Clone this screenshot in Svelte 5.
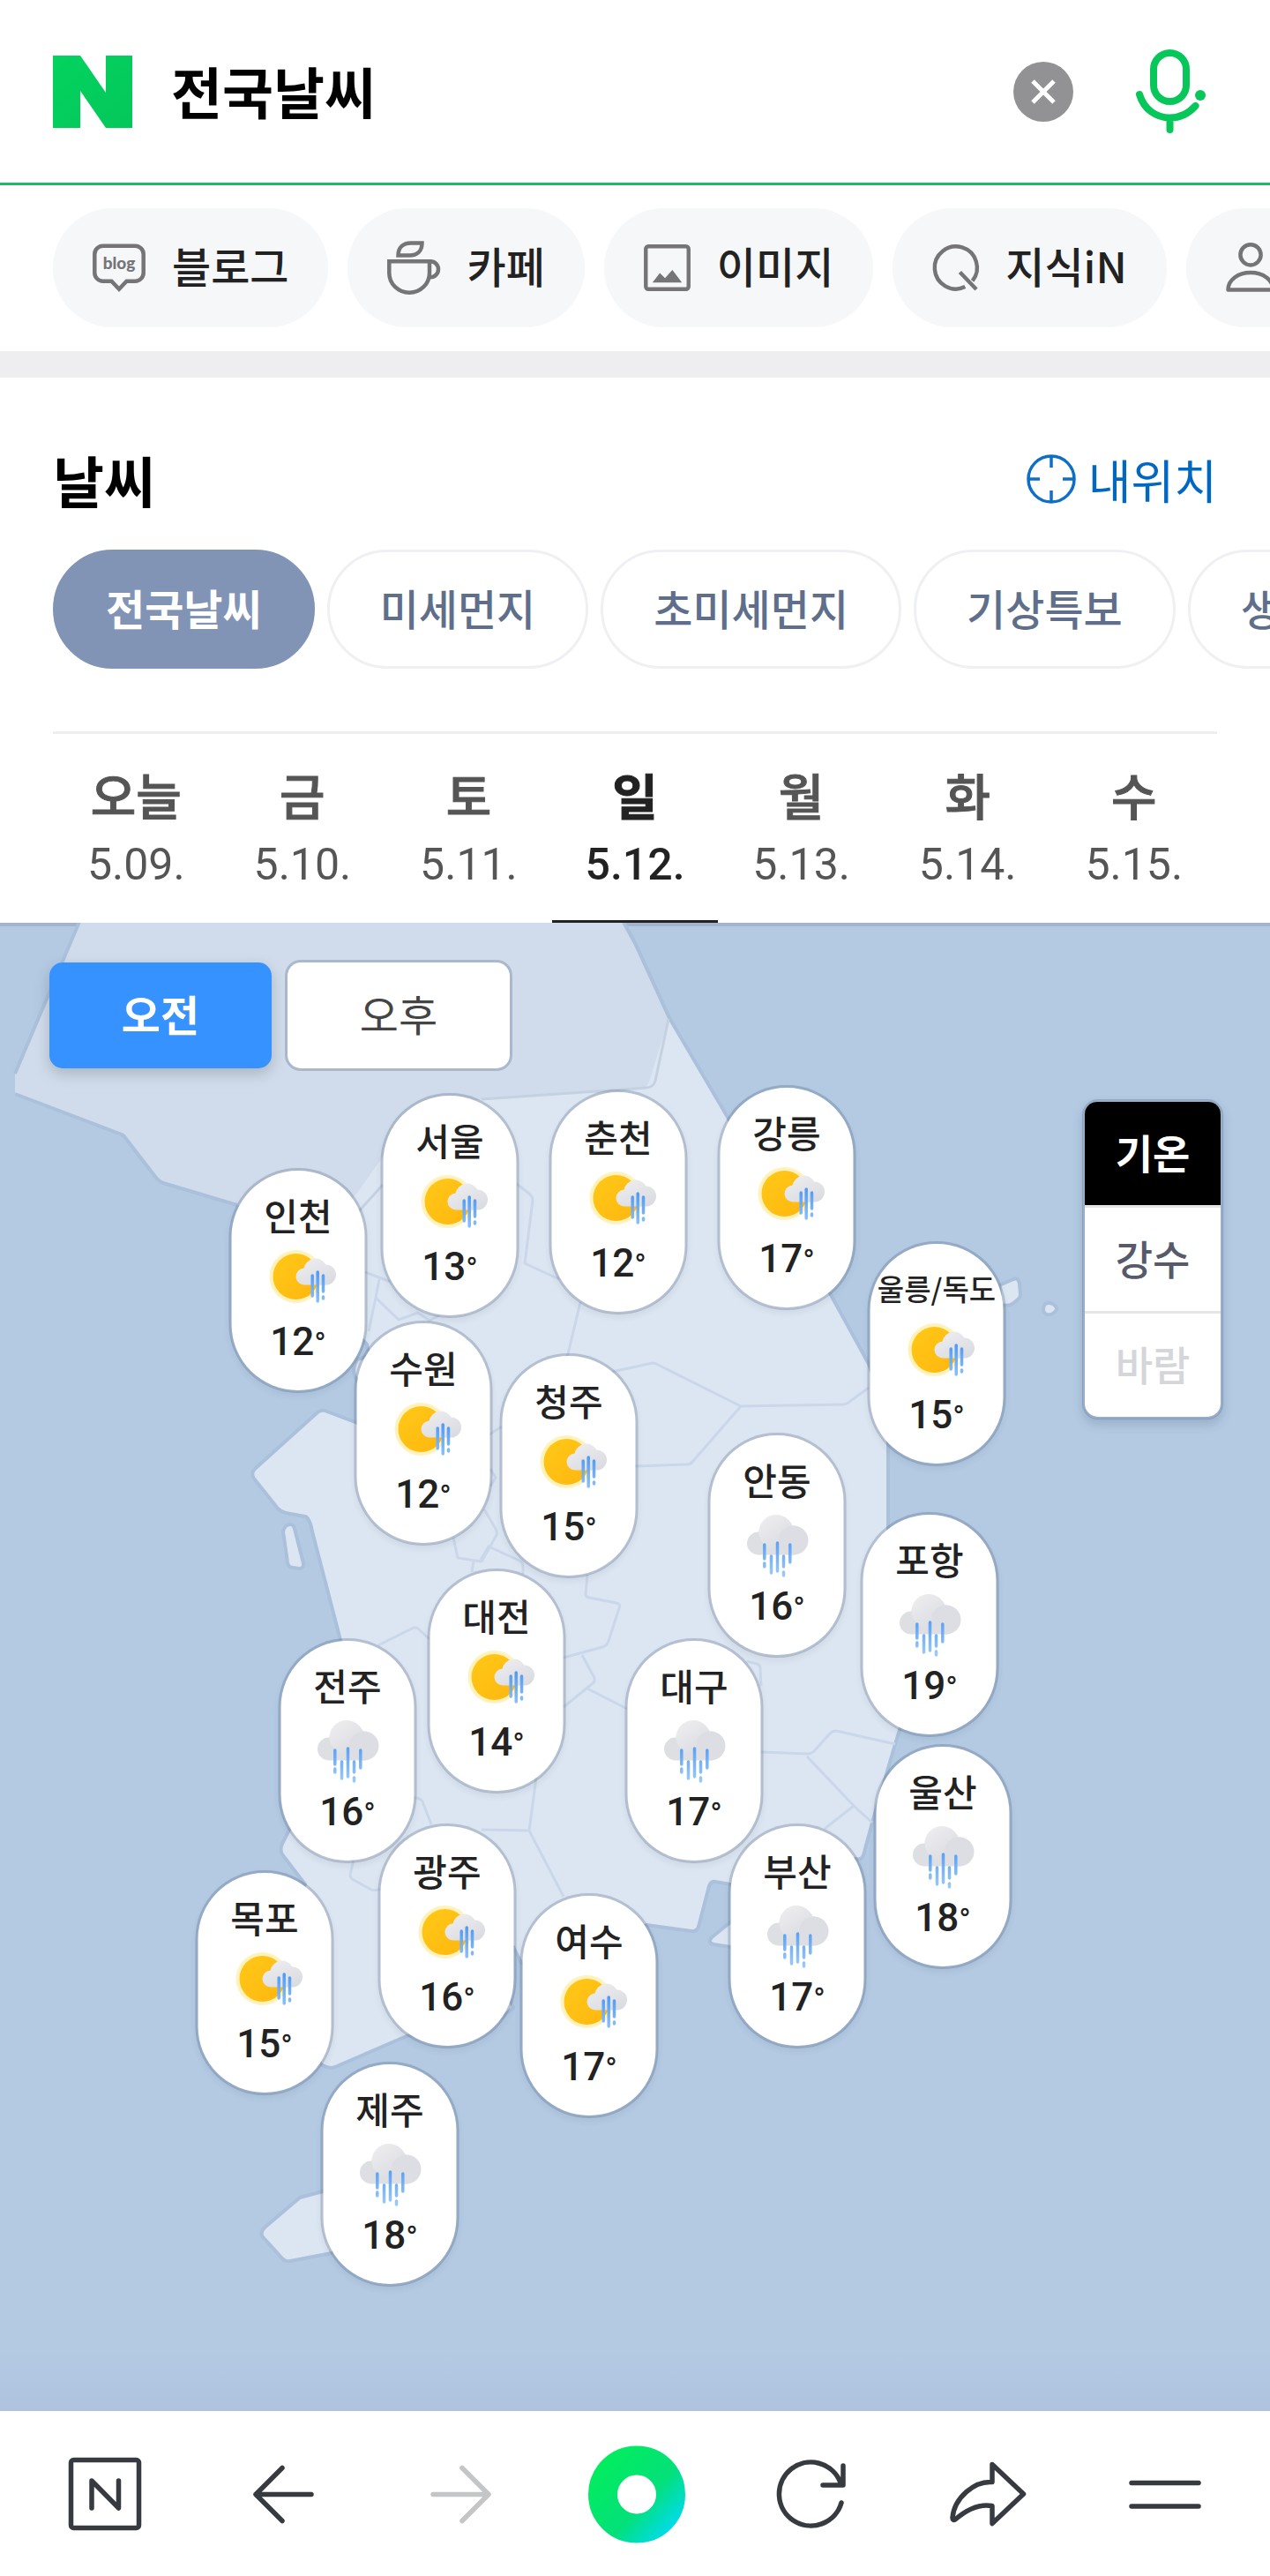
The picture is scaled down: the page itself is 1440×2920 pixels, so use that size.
<script>
    let query = $state('전국날씨');
    let activeTab = $state('전국날씨');
    let activeDay = $state('5.12.');
    let period = $state('오전');
    let layer = $state('기온');

    const services = [
        { name: '블로그', icon: 'blog' },
        { name: '카페', icon: 'cafe' },
        { name: '이미지', icon: 'image' },
        { name: '지식iN', icon: 'kin' },
        { name: '인물', icon: 'person' }
    ];

    const tabs = ['전국날씨', '미세먼지', '초미세먼지', '기상특보', '생활지수'];

    const days = [
        { name: '오늘', date: '5.09.' },
        { name: '금', date: '5.10.' },
        { name: '토', date: '5.11.' },
        { name: '일', date: '5.12.' },
        { name: '월', date: '5.13.' },
        { name: '화', date: '5.14.' },
        { name: '수', date: '5.15.' }
    ];

    const layers = [
        { name: '기온' },
        { name: '강수' },
        { name: '바람', disabled: true }
    ];

    // x: 핀의 가로 중심, y: 핀의 위쪽 (지도 좌표)
    const MAP_W = 1440;
    const MAP_H = 1687;
    const cities = [
        { name: '서울', x: 510, y: 193, temp: 13, sky: 'sun' },
        { name: '춘천', x: 701, y: 189, temp: 12, sky: 'sun' },
        { name: '강릉', x: 892, y: 184, temp: 17, sky: 'sun' },
        { name: '인천', x: 338, y: 278, temp: 12, sky: 'sun' },
        { name: '울릉/독도', x: 1062, y: 361, temp: 15, sky: 'sun' },
        { name: '수원', x: 480, y: 451, temp: 12, sky: 'sun' },
        { name: '청주', x: 645, y: 488, temp: 15, sky: 'sun' },
        { name: '안동', x: 881, y: 578, temp: 16, sky: 'rain' },
        { name: '포항', x: 1054, y: 668, temp: 19, sky: 'rain' },
        { name: '대전', x: 563, y: 732, temp: 14, sky: 'sun' },
        { name: '전주', x: 394, y: 811, temp: 16, sky: 'rain' },
        { name: '대구', x: 787, y: 811, temp: 17, sky: 'rain' },
        { name: '울산', x: 1069, y: 931, temp: 18, sky: 'rain' },
        { name: '광주', x: 507, y: 1021, temp: 16, sky: 'sun' },
        { name: '부산', x: 904, y: 1021, temp: 17, sky: 'rain' },
        { name: '목포', x: 300, y: 1074, temp: 15, sky: 'sun' },
        { name: '여수', x: 668, y: 1100, temp: 17, sky: 'sun' },
        { name: '제주', x: 442, y: 1291, temp: 18, sky: 'rain' }
    ];
</script>

<svg class="defs" width="0" height="0" aria-hidden="true">
    <defs>
        <linearGradient id="sunFill" x1="0" y1="0" x2="1" y2="1">
            <stop offset="0" stop-color="#ffc917" />
            <stop offset="1" stop-color="#ffb60f" />
        </linearGradient>
        <linearGradient id="cloudFill" x1="0" y1="0" x2="0.7" y2="1">
            <stop offset="0" stop-color="#efeff1" />
            <stop offset="1" stop-color="#dbdce1" />
        </linearGradient>
        <linearGradient id="rainFill" gradientUnits="userSpaceOnUse" x1="0" y1="34" x2="0" y2="80">
            <stop offset="0" stop-color="#4f9af3" />
            <stop offset="1" stop-color="#9ccaf9" />
        </linearGradient>
        <linearGradient id="dotFill" gradientUnits="userSpaceOnUse" x1="20" y1="20" x2="98" y2="92">
            <stop offset="0" stop-color="#03ec5f" />
            <stop offset="0.6" stop-color="#03e07a" />
            <stop offset="1" stop-color="#00dbe8" />
        </linearGradient>
        <linearGradient id="logoFill" x1="0" y1="0" x2="1" y2="1">
            <stop offset="0" stop-color="#03d35f" />
            <stop offset="1" stop-color="#04c75a" />
        </linearGradient>
    </defs>
</svg>

<div class="page">
    <header class="search">
        <a class="logo" href="#home" aria-label="네이버">
            <svg width="90" height="82" viewBox="0 0 90 82">
                <path d="M0 0h31l29 42V0h30v82H60L31 40v42H0z" fill="url(#logoFill)" />
            </svg>
        </a>
        <input class="query" type="text" aria-label="검색어" bind:value={query} />
        <button class="clear" aria-label="지우기" onclick={() => (query = '')}>
            <svg width="68" height="68" viewBox="0 0 68 68">
                <circle cx="34" cy="34" r="34" fill="#929294" />
                <path d="M22 22l24 24M46 22L22 46" stroke="#fff" stroke-width="5" />
            </svg>
        </button>
        <button class="mic" aria-label="음성검색">
            <svg width="80" height="96" viewBox="0 0 80 96" fill="none" stroke="#07c75b" stroke-width="8" stroke-linecap="round">
                <rect x="20" y="4" width="37" height="55" rx="18.5" />
                <path d="M4 51C9 68 23 77.500 38.500 77.500c11 0 21-4.500 29-13.500M38.500 79v12" />
                <circle cx="73" cy="52" r="6" fill="#07c75b" stroke="none" />
            </svg>
        </button>
    </header>

    <nav class="services">
        {#each services as s (s.name)}
            <a class="chip" href="#{s.icon}">
                {#if s.icon === 'blog'}
                    <svg class="wide" viewBox="0 0 60 60" fill="none" stroke="#757577" stroke-width="4.500">
                        <path d="M12 4.700h36a9.500 9.500 0 0 1 9.700 9.500v21a9.500 9.500 0 0 1-9.700 9.500H38.500l-8.500 9-8.500-9H12a9.500 9.500 0 0 1-9.700-9.500v-21A9.500 9.500 0 0 1 12 4.700z" />
                        <text x="30" y="31" class="blog-word">blog</text>
                    </svg>
                {:else if s.icon === 'cafe'}
                    <svg class="wide" viewBox="0 0 60 60" fill="none" stroke="#757577" stroke-width="4.500">
                        <path d="M2.300 22.300h45.700v13.200a22.800 22.200 0 0 1-45.700 0z" />
                        <path d="M47 22.300h2a9 9 0 0 1 9 9c0 5-4 9-9 9h-2" />
                        <path d="M12.500 15.500C12.500 6.500 18 1.500 27 1.500h12.500c0 9-5.500 14-14 14z" />
                    </svg>
                {:else if s.icon === 'image'}
                    <svg class="narrow" viewBox="0 0 54 54" fill="none" stroke="#757577" stroke-width="4.500">
                        <rect x="2.300" y="2.300" width="49.400" height="49.400" rx="3" />
                        <path d="M10 44l8.500-11 6 6 8.500-9.500L44 44z" fill="#757577" stroke="none" />
                    </svg>
                {:else if s.icon === 'kin'}
                    <svg class="narrow" viewBox="0 0 54 54" fill="none" stroke="#757577" stroke-width="4.500">
                        <path d="M38 49A24.500 24.500 0 1 1 46.500 42.200M32 32l19 20" />
                    </svg>
                {:else}
                    <svg class="wide" viewBox="0 0 60 60" fill="none" stroke="#757577" stroke-width="4.500" stroke-linejoin="round">
                        <circle cx="28" cy="14.800" r="11.600" />
                        <path d="M2.500 54.500C2.500 43 14 35 28 35s25.500 8 25.500 19.500z" />
                    </svg>
                {/if}
                <span>{s.name}</span>
            </a>
        {/each}
    </nav>

    <main class="weather">
        <div class="title-row">
            <h1>날씨</h1>
            <a class="locate" href="#here">
                <svg width="56" height="56" viewBox="0 0 56 56" fill="none" stroke="#0f6fc5" stroke-width="3.500">
                    <circle cx="28" cy="28" r="26" />
                    <path d="M28 2v13M28 41v13M2 28h13M41 28h13" />
                </svg>
                <span>내위치</span>
            </a>
        </div>

        <div class="tabs">
            {#each tabs as tab (tab)}
                <button class="tab" class:active={tab === activeTab} onclick={() => (activeTab = tab)}>{tab}</button>
            {/each}
        </div>

        <div class="days">
            {#each days as d (d.date)}
                <button class="day" class:active={d.date === activeDay} onclick={() => (activeDay = d.date)}>
                    <span class="name">{d.name}</span>
                    <span class="date">{d.date}</span>
                </button>
            {/each}
        </div>

        <section class="map">
            <svg class="land" viewBox="0 0 1440 1687" aria-hidden="true">
                <g fill="#dce6f2" stroke="#abc0db" stroke-width="4" stroke-linejoin="round">
                    <path d="M704 -6L720 23 759 108 826 222 941 420 985 500 1003 550Q1007 560 1007 590V685L1022 850Q1026 880 1021 912L1015 931 989 1020 979 1057Q977 1063 970 1061L900 1094 828 1090 811 1087Q806 1086 804 1092L792 1138Q790 1144 784 1143L733 1136 640 1190 591 1179 582 1161 570 1200 582 1230 569 1241 461 1262 380 1297Q374 1300 364 1294L330 1240 300 1150 346 1090 320 1056Q317 1051 320 1044L328 1028 386 813 354 690Q351 674 346 673L324 669Q319 668 315 664L288 630Q284 624 289 619L360 555Q365 551 371 554L405 567 425 520 416 478 380 440 300 330 406 200z" />
                    <path d="M321 690q2-8 8-8 4 0 5 5l10 39q1 6-5 6l-7-1q-5 0-6-6z" />
                    <path d="M1133 411l16-7q6-2 7 5l1 12q0 4-3 6l-6 5q-5 3-13 1z" />
                    <path d="M1183 438q0-7 6-7 5 0 8 4 3 3-2 7-4 3-8 2-4-1-4-6z" />
                    <path d="M405 495q-8 13 0 24l20 4v-34z" />
                    <path d="M828 1133l-21 17q-5 6 2 8l19 3 40 20v-60z" />
                    <path d="M390 1435l-24 3-26 7-40 34q-7 7 0 13l20 22q3 4 9 3l47-9 60-30 60-50-40-20z" />
                </g>
                <path d="M92 -6L17 171v23l121 46q3 2 5 5l34 44q3 4 8 6l84 25 110 15 27-30 60-85 80-20 174-12q14 0 16-8l22-70-39-85L704 -6z" fill="#d0dceb" />
                <g fill="none" stroke-linejoin="round" stroke-width="3">
                    <path d="M92 -6L17 171M17 194l121 46q3 2 5 5l34 44q3 4 8 6l84 25M704 -6L720 23 759 108" stroke="#abc0db" stroke-width="4" />
                    <path d="M406 328l28-31M546 200l174-12 12-1q9 0 11-8l15-70" stroke="#c4d1e0" />
                    <path
                        d="M586 296l14 11q4 3 4 8l-9 71 39 18M658 430l-15 63M694 509l46-10q3 0 6 2l94 47 116-2q4 0 7-3l22-16M840 548l-54 62q-3 4-7 4l-59 2M414 396l29 11M430 404l-4 21-8 38M426 425l26 25 22-8 13 9 11-6M555 580l14-9M556 619l6 10-6 10M549 665l13 22q3 5 0 9l-16 28-27-4-5-23M545 722l9-15 35 16q4 2 4 6v9M537 724l-2 12M666 739l-2 22q0 3 4 4l31 6q5 1 3 6l-12 37q-2 6-7 7l-44 12M660 830l13 24q3 6-2 9l-32 26M666 868l45 23M429 819l38-19q3-2 7 0l13 12M470 992q7 0 9 4l10 26M401 1062l-4 17q0 4 4 6l20 11q4 2 10-1M546 1028l54 1 8-60M600 1029l39 75M863 940l53 2q4 0 7-3l18-20q3-3 7-3l67 15M915 945l53 56 21 19M968 1001l-33 26M847 837l11 3q4 1 4 5l1 20"
                        stroke="#c9d7e9"
                    />
                </g>
            </svg>

            <div class="periods">
                {#each ['오전', '오후'] as p (p)}
                    <button class="period" class:active={p === period} onclick={() => (period = p)}>{p}</button>
                {/each}
            </div>

            <div class="layers">
                {#each layers as l (l.name)}
                    <button class="layer" class:active={l.name === layer} disabled={l.disabled} onclick={() => (layer = l.name)}>{l.name}</button>
                {/each}
            </div>

            {#each cities as c (c.name)}
                <a class="pin" href="#{c.name}" style="left: {(c.x / MAP_W) * 100}%; top: {(c.y / MAP_H) * 100}%">
                    <span class="city" class:long={c.name.length > 3}>{c.name}</span>
                    {#if c.sky === 'sun'}
                        <svg width="100" height="84" viewBox="0 0 100 84">
                            <circle cx="47" cy="40" r="30" fill="#fff2bd" />
                            <circle cx="47" cy="40" r="26" fill="url(#sunFill)" />
                            <path d="M57 49.500a9.500 9.500 0 0 1-1-19 13.500 13.500 0 0 1 25-4 11.500 11.500 0 0 1 0 23z" fill="url(#cloudFill)" />
                            <path d="M65.700 39v23M71.700 35v33M78 39v18M78 63v2" stroke="url(#rainFill)" stroke-width="3.500" stroke-linecap="round" />
                        </svg>
                    {:else}
                        <svg width="100" height="84" viewBox="0 0 100 84">
                            <path d="M28 55.500a13 13 0 0 1 1-26 20 20 0 0 1 38-7 17 16.500 0 0 1 2 33z" fill="#dedfe3" />
                            <circle cx="48.500" cy="29.500" r="19.500" fill="url(#cloudFill)" />
                            <circle cx="68" cy="39" r="16.500" fill="#dddee3" />
                            <path d="M35.300 44v16M35.300 65v4M43 57v19M50 42v32M57 57v12M57 75v4M64.300 44v20" stroke="url(#rainFill)" stroke-width="3.500" stroke-linecap="round" />
                        </svg>
                    {/if}
                    <span class="temp">{c.temp}<span class="deg">°</span></span>
                </a>
            {/each}
        </section>
    </main>

    <nav class="toolbar">
        <button aria-label="네이버 홈">
            <svg viewBox="0 0 110 110" fill="none" stroke="#373b40" stroke-width="5.500" stroke-linecap="round" stroke-linejoin="round">
                <rect x="16.500" y="16.500" width="77" height="77" rx="3" />
                <path d="M40 71V40l30.500 31V40" />
            </svg>
        </button>
        <button aria-label="뒤로">
            <svg viewBox="0 0 110 110" fill="none" stroke="#373b40" stroke-width="5.500" stroke-linecap="round" stroke-linejoin="round">
                <path d="M89 55.500H26M56 25.500l-30 30 30 30" />
            </svg>
        </button>
        <button aria-label="앞으로" disabled>
            <svg viewBox="0 0 110 110" fill="none" stroke="#c4c5c6" stroke-width="5.500" stroke-linecap="round" stroke-linejoin="round">
                <path d="M26 55.500h63M59 25.500l30 30-30 30" />
            </svg>
        </button>
        <button aria-label="그린닷">
            <svg viewBox="0 0 110 110">
                <circle cx="57" cy="55.500" r="38.500" fill="none" stroke="url(#dotFill)" stroke-width="33" />
            </svg>
        </button>
        <button aria-label="새로고침">
            <svg viewBox="0 0 110 110" fill="none" stroke="#373b40" stroke-width="5.500" stroke-linecap="round" stroke-linejoin="round">
                <path d="M89 65A36 36 0 1 1 88 42M91 23v22H68" />
            </svg>
        </button>
        <button aria-label="공유">
            <svg viewBox="0 0 110 110" fill="none" stroke="#373b40" stroke-width="5.500" stroke-linecap="round" stroke-linejoin="round">
                <path d="M59 21.500L94.500 55 59 88.500V68.500C45 66 32 71 17 84c-2 1-3 0-3-2C16 59 39 40 59 41.500z" />
            </svg>
        </button>
        <button aria-label="메뉴">
            <svg viewBox="0 0 110 110" fill="none" stroke="#373b40" stroke-width="5.500" stroke-linecap="round">
                <path d="M17 42.500h76M17 69h76" />
            </svg>
        </button>
    </nav>
</div>

<style>
    :global(body) { margin: 0; background: #fff; }
    .defs { position: absolute; }
    .page { display: flex; flex-direction: column; overflow: hidden; background: #fff; color: #222; font-family: Roboto, "Noto Sans CJK KR", sans-serif; }
    button { padding: 0; border: 0; background: none; font-family: inherit; color: inherit; cursor: pointer; }
    a { color: inherit; text-decoration: none; }
    svg { display: block; flex: none; overflow: visible; }

    .search { display: flex; align-items: center; height: 207px; padding: 0 72px 0 60px; border-bottom: 3px solid #1cbb65; }
    .query { flex: 1; min-width: 0; height: 100px; margin: 0 40px 0 44px; padding: 0 0 4px; box-sizing: border-box; border: 0; outline: 0; background: none; color: #000; font: 700 63px/96px "Noto Sans CJK KR", sans-serif; }
    .mic { margin-left: 71px; }

    .services { display: flex; gap: 22px; padding: 26px 60px 27px; border-bottom: 30px solid #eeeef0; overflow: hidden; }
    .chip { display: flex; flex: none; align-items: center; gap: 30px; height: 135px; padding: 0 45px; box-sizing: border-box; border-radius: 68px; background: #f6f7f9; font: 500 48px/72px "Noto Sans CJK KR", sans-serif; white-space: nowrap; }
    .chip span { padding-bottom: 7px; }
    .wide { width: 60px; height: 60px; }
    .narrow { width: 53px; height: 53px; }
    .blog-word { fill: #757577; stroke: none; font: 900 19px Lato, sans-serif; text-anchor: middle; }

    .title-row { display: flex; align-items: center; justify-content: space-between; height: 72px; padding: 79px 60px 44px; }
    h1 { margin: 0; color: #000; font: 700 63px/72px "Noto Sans CJK KR", sans-serif; }
    .locate { display: flex; align-items: center; gap: 14px; color: #0068c3; font: 400 53px/72px "Noto Sans CJK KR", sans-serif; }

    .tabs { display: flex; gap: 14px; padding: 0 60px 71px; overflow: hidden; }
    .tab { flex: none; height: 135px; padding: 0 57px 6px; border: 3px solid #eff0f4; border-radius: 68px; color: #5f6f8b; font: 500 48px/72px "Noto Sans CJK KR", sans-serif; white-space: nowrap; }
    .tab.active { border-color: #8294b6; background: #8294b6; color: #fff; font-weight: 700; }

    .days { display: flex; margin: 0 60px; border-top: 3px solid #eee; }
    .day { display: flex; flex: 1; flex-direction: column; align-items: center; gap: 16px; height: 214px; padding-top: 34px; box-sizing: border-box; border-bottom: 3px solid transparent; color: #555; }
    .name { font: 500 56px/68px "Noto Sans CJK KR", sans-serif; -webkit-text-stroke: 1px; }
    .date { font: 400 50px/60px Roboto, sans-serif; }
    .day.active { border-color: #222; color: #222; }
    .day.active .name { font-weight: 700; }
    .day.active .date { font-weight: 500; }

    .map { position: relative; background: linear-gradient(#b4cae3 96%, #afc3df); box-shadow: inset 0 4px #a4b4cf; }
    .land { width: 100%; height: auto; overflow: hidden; }

    .periods { position: absolute; top: 42px; left: 53px; display: flex; gap: 12px; }
    .period { width: 258px; height: 126px; padding-bottom: 6px; box-sizing: border-box; border: 3px solid rgb(40 60 90 / 22%); border-radius: 18px; background: #fff; background-clip: padding-box; color: #444; font: 400 48px/72px "Noto Sans CJK KR", sans-serif; }
    .period.active { border-color: transparent; background: #3592ff padding-box; color: #fff; font-weight: 700; filter: drop-shadow(0 6px 8px rgb(0 0 0 / 18%)); }

    .layers { position: absolute; top: 200px; right: 53px; display: flex; flex-direction: column; width: 160px; box-sizing: border-box; border: 3px solid rgb(40 60 90 / 20%); border-radius: 18px; background: #fff; background-clip: padding-box; box-shadow: 0 6px 12px rgb(40 60 90 / 18%); }
    .layer { height: 117px; padding-bottom: 6px; color: #565a6b; font: 500 46px/72px "Noto Sans CJK KR", sans-serif; }
    .layer + .layer { border-top: 3px solid #e5e5e5; height: 120px; }
    .layer.active { border-radius: 14px 14px 0 0; background: #000; color: #fff; font-weight: 700; }
    .layer:disabled { color: #d5d6da; }

    .pin { position: absolute; display: flex; flex-direction: column; align-items: center; width: 157px; height: 255px; padding-top: 20px; box-sizing: border-box; border: 3px solid rgb(40 60 90 / 22%); border-radius: 78px; background: #fff; background-clip: padding-box; box-shadow: 0 4px 6px rgb(40 60 90 / 7%); transform: translateX(-50%); color: #222; }
    .city { height: 60px; font: 500 42px/60px "Noto Sans CJK KR", sans-serif; white-space: nowrap; }
    .city.long { font-size: 33px; }
    .temp { margin-top: 2px; font: 500 44px/56px Roboto, sans-serif; }
    .deg { font-size: 36px; font-weight: 400; }

    .toolbar { display: flex; align-items: center; justify-content: space-between; height: 187px; padding: 0 64px; background: #fff; }
    .toolbar svg { width: 110px; height: 110px; }
</style>
